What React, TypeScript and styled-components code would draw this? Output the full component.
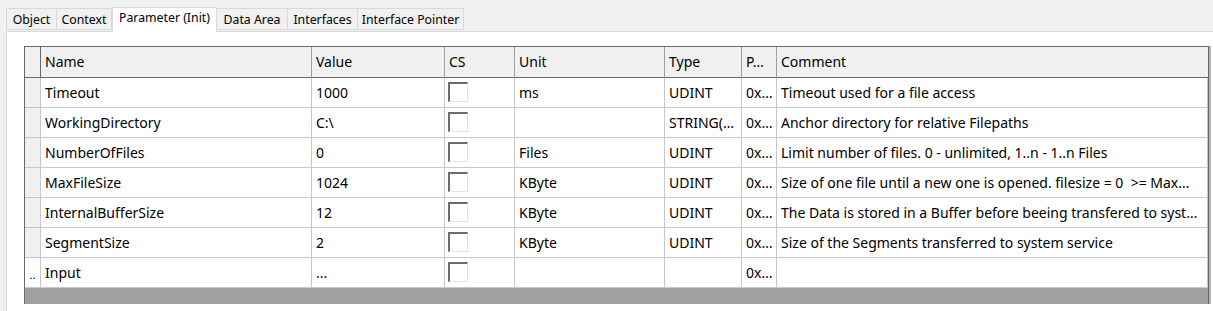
import styled, { createGlobalStyle } from 'styled-components';

const GlobalStyle = createGlobalStyle`
  html, body {
    margin: 0;
    padding: 0;
    background: #f0f0f0;
    overflow: hidden;
  }
  body {
    font-family: "Noto Sans", "Open Sans", Arial, sans-serif;
    color: #000;
  }
`;

const Window = styled.div`
  width: 1213px;
  height: 311px;
  background: #f0f0f0;
  overflow: hidden;
`;

const TabStrip = styled.div`
  display: flex;
  align-items: flex-end;
  height: 31px;
  padding-left: 6px;
  box-sizing: border-box;
  position: relative;
  z-index: 1;
`;

const Tab = styled.div<{ $w: number; $active?: boolean }>`
  width: ${(p) => p.$w}px;
  height: ${(p) => (p.$active ? 25 : 22)}px;
  margin-bottom: ${(p) => (p.$active ? -1 : 1)}px;
  box-sizing: border-box;
  border: 1px solid #d9d9d9;
  border-bottom: ${(p) => (p.$active ? 'none' : '1px solid #d9d9d9')};
  border-left: ${(p) => (p.$active ? '1px solid #d9d9d9' : 'none')};
  background: ${(p) => (p.$active ? '#fff' : '#f0f0f0')};
  font-size: 12.3px;
  line-height: 20px;
  padding-top: ${(p) => (p.$active ? 0 : 1)}px;
  text-align: center;
  white-space: nowrap;

  &:first-child {
    border-left: 1px solid #d9d9d9;
  }
`;

const Panel = styled.div`
  margin-left: 6px;
  height: 290px;
  background: #fff;
  border-top: 1px solid #d9d9d9;
  border-left: 1px solid #d9d9d9;
  padding: 14px 0 0 17px;
  box-sizing: border-box;
`;

const Grid = styled.div`
  width: 1185px;
  border-top: 1px solid #696969;
  border-left: 1px solid #696969;
  border-right: 1px solid #696969;
  box-shadow: 2px 0 0 #b4b4b4;
  box-sizing: border-box;
  font-size: 14px;
`;

const Row = styled.div<{ $header?: boolean }>`
  display: grid;
  grid-template-columns: 16px 271px 133px 70px 150px 77px 35px 1fr;
  height: ${(p) => (p.$header ? 31 : 30)}px;
  background: ${(p) => (p.$header ? '#f0f0f0' : '#fff')};
`;

const Cell = styled.div<{ $header?: boolean }>`
  box-sizing: border-box;
  border-right: 1px solid ${(p) => (p.$header ? '#a0a0a0' : '#c8c8c8')};
  border-bottom: 1px solid ${(p) => (p.$header ? '#696969' : '#c8c8c8')};
  padding-left: 4px;
  display: flex;
  align-items: center;
  white-space: pre;
  overflow: hidden;
  line-height: 18px;

  &:last-child {
    border-right: ${(p) => (p.$header ? 'none' : '1px solid #c8c8c8')};
  }
`;

const Selector = styled.div<{ $header?: boolean; $blank?: boolean }>`
  box-sizing: border-box;
  background: ${(p) => (p.$blank ? '#fff' : '#f0f0f0')};
  border-right: 1px solid ${(p) => (p.$header ? '#696969' : '#c8c8c8')};
  border-bottom: 1px solid ${(p) => (p.$header ? '#696969' : '#c8c8c8')};
  font-size: 11px;
  display: flex;
  align-items: center;
  justify-content: center;
  padding-top: 4px;
`;

const CheckCell = styled.div`
  box-sizing: border-box;
  border-right: 1px solid #c8c8c8;
  border-bottom: 1px solid #c8c8c8;
  padding: 4px 0 0 3px;
`;

const CheckBox = styled.div`
  width: 20px;
  height: 20px;
  box-sizing: border-box;
  background: #fff;
  border-top: 2px solid #6d6d6d;
  border-left: 2px solid #6d6d6d;
  border-right: 1px solid #e3e3e3;
  border-bottom: 1px solid #e3e3e3;
`;

const Filler = styled.div`
  height: 16px;
  background: #a0a0a0;
`;

type Param = {
  name: string;
  value: string;
  unit: string;
  type: string;
  p: string;
  comment: string;
  selector?: string;
};

const params: Param[] = [
  { name: 'Timeout', value: '1000', unit: 'ms', type: 'UDINT', p: '0x…', comment: 'Timeout used for a file access' },
  { name: 'WorkingDirectory', value: 'C:\\', unit: '', type: 'STRING(…', p: '0x…', comment: 'Anchor directory for relative Filepaths' },
  { name: 'NumberOfFiles', value: '0', unit: 'Files', type: 'UDINT', p: '0x…', comment: 'Limit number of files. 0 - unlimited, 1..n - 1..n Files' },
  { name: 'MaxFileSize', value: '1024', unit: 'KByte', type: 'UDINT', p: '0x…', comment: 'Size of one file until a new one is opened. filesize = 0  >= Max…' },
  { name: 'InternalBufferSize', value: '12', unit: 'KByte', type: 'UDINT', p: '0x…', comment: 'The Data is stored in a Buffer before beeing transfered to syst…' },
  { name: 'SegmentSize', value: '2', unit: 'KByte', type: 'UDINT', p: '0x…', comment: 'Size of the Segments transferred to system service' },
  { name: 'Input', value: '...', unit: '', type: '', p: '0x…', comment: '', selector: '..' },
];

const tabs = [
  { label: 'Object', w: 51 },
  { label: 'Context', w: 55 },
  { label: 'Parameter (Init)', w: 105, active: true },
  { label: 'Data Area', w: 71 },
  { label: 'Interfaces', w: 70 },
  { label: 'Interface Pointer', w: 106 },
];

export default function App() {
  return (
    <Window>
      <GlobalStyle />
      <TabStrip>
        {tabs.map((t) => (
          <Tab key={t.label} $w={t.w} $active={t.active}>
            {t.label}
          </Tab>
        ))}
      </TabStrip>
      <Panel>
        <Grid>
          <Row $header>
            <Selector $header />
            <Cell $header>Name</Cell>
            <Cell $header>Value</Cell>
            <Cell $header>CS</Cell>
            <Cell $header>Unit</Cell>
            <Cell $header>Type</Cell>
            <Cell $header>P…</Cell>
            <Cell $header>Comment</Cell>
          </Row>
          {params.map((r) => (
            <Row key={r.name}>
              <Selector $blank={!!r.selector}>{r.selector}</Selector>
              <Cell>{r.name}</Cell>
              <Cell>{r.value}</Cell>
              <CheckCell>
                <CheckBox />
              </CheckCell>
              <Cell>{r.unit}</Cell>
              <Cell>{r.type}</Cell>
              <Cell>{r.p}</Cell>
              <Cell>{r.comment}</Cell>
            </Row>
          ))}
          <Filler />
        </Grid>
      </Panel>
    </Window>
  );
}
